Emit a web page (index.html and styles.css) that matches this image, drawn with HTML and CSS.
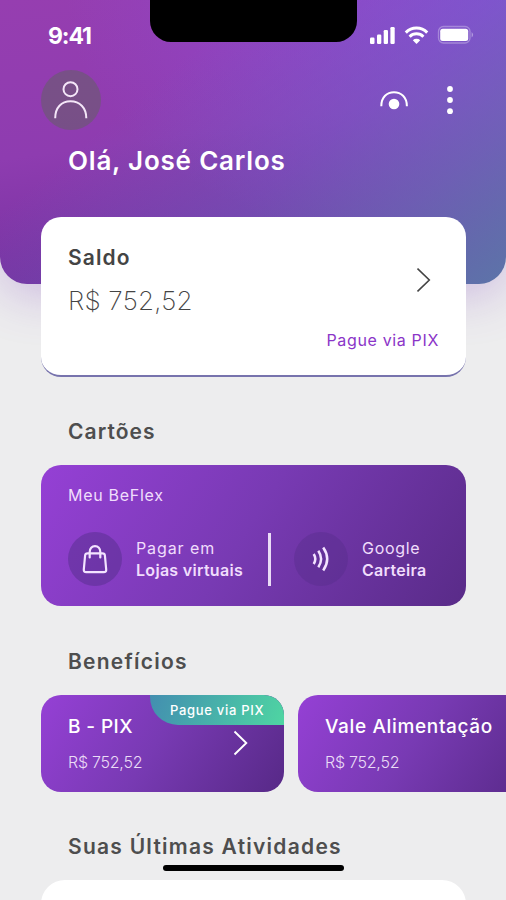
FILE: index.html
```html
<!DOCTYPE html>
<html lang="pt-BR">
<head>
<meta charset="utf-8">
<meta name="viewport" content="width=device-width">
<title>BeFlex</title>
<link rel="stylesheet" href="styles.css">
</head>
<body>
<div class="phone">
  <header class="hero">
    <div class="notch"></div>
    <div class="status">
      <span class="clock">9:41</span>
      <svg class="status-icons" width="106" height="22" viewBox="0 0 106 22" fill="#fff">
        <rect x="1" y="13.500" width="4.500" height="6.500" rx="1.200"/><rect x="8" y="10.500" width="4.300" height="9.500" rx="1.200"/><rect x="14.700" y="6" width="4.300" height="14" rx="1.200"/><rect x="21.400" y="3" width="4.300" height="17" rx="1.200"/>
        <g fill="none" stroke="#fff" stroke-width="3"><path d="M36.800 8.600a15 15 0 0 1 21.400 0"/><path d="M40.600 12.700a9.800 9.800 0 0 1 13.800 0"/></g>
        <path d="M43.800 16.200a5.400 5.400 0 0 1 7.400 0L47.500 19.900z"/>
        <rect x="69.500" y="2.500" width="31.500" height="16.500" rx="5" fill="none" stroke="#fff" stroke-opacity=".3" stroke-width="1.300"/>
        <rect x="71.200" y="4.700" width="28" height="12.300" rx="2.500"/>
        <path d="M102.600 8q3 2.800 0 5.600z" opacity=".4"/>
      </svg>
    </div>
    <div class="toolbar">
      <div class="avatar">
        <svg width="60" height="60" viewBox="0 0 60 60" fill="none" stroke="#f4e6f8" stroke-width="2"><circle cx="29.500" cy="19.200" r="7"/><path d="M14.200 48.300C14.200 37.500 20.500 31.300 29.500 31.300s15.800 6.200 15.800 17"/></svg>
      </div>
      <div class="actions">
        <svg width="30" height="22" viewBox="0 0 30 22"><path d="M2.300 17.200C2.300 8 8 3.200 15 3.200s12.900 4.800 12.900 14" fill="none" stroke="#fff" stroke-width="2"/><circle cx="15" cy="15" r="5.300" fill="#fff"/></svg>
        <svg width="8" height="32" viewBox="0 0 8 32" fill="#fff"><circle cx="4" cy="5" r="2.900"/><circle cx="4" cy="16" r="2.900"/><circle cx="4" cy="27.200" r="2.900"/></svg>
      </div>
    </div>
    <h1 class="greeting">Olá, José Carlos</h1>
  </header>

  <main class="content">
    <section class="balance">
      <h2 class="balance-title">Saldo</h2>
      <div class="balance-row">
        <span class="balance-value">R$ 752,52</span>
        <svg class="chev" width="14" height="26" viewBox="0 0 14 26" fill="none" stroke="#444" stroke-width="1.600"><path d="M.5 1.500 12.300 13 .5 24.500"/></svg>
      </div>
      <a class="balance-link">Pague via PIX</a>
    </section>

    <h2 class="heading cards-heading">Cartões</h2>
    <section class="wallet">
      <p class="wallet-name">Meu BeFlex</p>
      <div class="wallet-row">
        <div class="disc">
          <svg width="54" height="54" viewBox="0 0 54 54" fill="none" stroke="#f3e3ff" stroke-width="2.200" stroke-linecap="round" stroke-linejoin="round"><path d="M19.500 21.300h15q2.200 0 2.400 2.200l1.300 14q.2 2.700-2.400 2.700H18.200q-2.600 0-2.400-2.700l1.300-14q.2-2.200 2.400-2.200z"/><path d="M21.700 25.500V20c0-3.500 2.200-5.800 5.300-5.800s5.300 2.300 5.300 5.800v5.500"/></svg>
        </div>
        <p class="pay"><span class="pay-top pagar">Pagar em</span><strong class="pay-name">Lojas virtuais</strong></p>
        <div class="divider"></div>
        <div class="disc disc-dim">
          <svg width="54" height="54" viewBox="0 0 54 54" fill="none" stroke="#f3e3ff" stroke-width="2.500"><path d="M19.700 22q3.200 5 0 10"/><path d="M24.300 18.800q5.600 8.200 0 16.400"/><path d="M29.200 15.500q8 11.500 0 23"/></svg>
        </div>
        <p class="pay"><span class="pay-top google">Google</span><strong class="pay-name">Carteira</strong></p>
      </div>
    </section>

    <h2 class="heading benefits-heading">Benefícios</h2>
    <div class="benefits">
      <article class="benefit">
        <span class="tag">Pague via PIX</span>
        <h3 class="benefit-name bpix">B - PIX</h3>
        <p class="benefit-value">R$ 752,52</p>
        <svg class="benefit-chev" width="15" height="26" viewBox="0 0 15 26" fill="none" stroke="#fff" stroke-width="1.900"><path d="M1.500 1.500 13.300 13 1.500 24.500"/></svg>
      </article>
      <article class="benefit">
        <h3 class="benefit-name">Vale Alimentação</h3>
        <p class="benefit-value">R$ 752,52</p>
      </article>
    </div>

    <h2 class="heading activity-heading">Suas Últimas Atividades</h2>
    <section class="activity"></section>
  </main>
  <div class="home-bar"></div>
</div>
</body>
</html>
```

FILE: styles.css
```css
* { box-sizing: border-box; margin: 0; padding: 0; }
body { background: #ededee; font-family: Inter, "Open Sans", sans-serif; font-kerning: normal; }
.phone { position: relative; width: 506px; height: 900px; overflow: hidden; background: #ededee; }
span, strong, h1, h2, h3, a, p { white-space: nowrap; }

.hero {
  height: 284px;
  border-radius: 0 0 27px 27px;
  background:
    linear-gradient(140deg, rgba(105, 95, 190, 0) 30%, rgba(108, 95, 190, .45) 58%, rgba(103, 106, 180, .75) 78%, rgba(93, 118, 170, .95) 98%),
    radial-gradient(ellipse 440px 260px at 100% 0, rgba(142, 78, 222, .9), rgba(142, 78, 222, .45) 50%, rgba(142, 78, 222, 0)),
    linear-gradient(172deg, #963eb0 0%, #8e3cb0 45%, #6a2c98 100%);
  box-shadow: 0 10px 50px rgba(126, 62, 190, .3);
}
.notch { position: absolute; top: 0; left: 150px; width: 207px; height: 42px; background: #000; border-radius: 0 0 21px 21px; }
.status { display: flex; justify-content: space-between; height: 70px; padding: 24px 31px 0 48px; }
.clock { color: #fff; font-size: 23px; line-height: 24px; font-weight: 700; letter-spacing: -1.1px; }
.toolbar { display: flex; justify-content: space-between; height: 60px; padding: 0 52px 0 41px; }
.avatar { width: 60px; height: 60px; border-radius: 50%; background: rgba(105, 92, 110, .62); }
.actions { display: flex; align-items: center; gap: 37px; }
.greeting { margin: 14px 0 0 68px; color: #fff; font-size: 26px; line-height: 34px; font-weight: 600; letter-spacing: .8px; }

.content { position: relative; margin-top: -67px; }
.balance { width: 425px; height: 160px; margin-left: 41px; padding: 27px 27px 0; border-radius: 20px; background: #fff; border-bottom: 2px solid #7773ad; }
.balance-title { font-size: 21px; line-height: 27px; font-weight: 600; color: #444; letter-spacing: 1.100px; }
.balance-row { display: flex; justify-content: space-between; height: 51px; padding-right: 8px; }
.balance-value { margin-top: 13px; font-size: 26px; line-height: 34px; font-weight: 200; color: #444; letter-spacing: .2px; }
.chev { margin-top: -4px; }
.balance-link { display: block; margin-top: 7px; text-align: right; color: #8b35c8; font-size: 16px; line-height: 22px; letter-spacing: .65px; }

.heading { margin-left: 68px; color: #4e4e4e; font-size: 21px; line-height: 28px; font-weight: 600; letter-spacing: 1.250px; }
.cards-heading { margin-top: 41px; letter-spacing: 1.050px; }
.wallet { width: 425px; height: 141px; margin: 19px 0 0 41px; padding: 19px 27px 0; border-radius: 20px; color: #f0ddfc; background: linear-gradient(123deg, #9540d5 0%, #783ab3 48%, #592b88 100%); }
.wallet-name { font-size: 16px; line-height: 22px; letter-spacing: .7px; }
.wallet-row { display: flex; align-items: center; margin-top: 26px; }
.disc { flex: none; width: 54px; height: 54px; border-radius: 50%; background: rgba(83, 45, 137, .48); }
.disc-dim { background: rgba(83, 45, 137, .38); }
.pay { flex: none; width: 132px; margin-left: 14px; font-size: 16px; line-height: 22.500px; }
.pay-top, .pay-name { display: block; }
.pagar { letter-spacing: .9px; }
.google { letter-spacing: .7px; }
.pay-name { font-weight: 600; letter-spacing: .3px; }
.divider { flex: none; width: 3px; height: 53px; margin-right: 23px; background: #eadcf6; }

.benefits-heading { margin-top: 42px; }
.benefits { display: flex; gap: 14px; width: 560px; margin: 19px 0 0 41px; }
.benefit { position: relative; flex: 0 0 243px; height: 97px; padding: 19px 26px 0 27px; overflow: hidden; border-radius: 20px; color: #fff; background: linear-gradient(123deg, #9540d5 0%, #783ab3 48%, #572987 100%); }
.tag { position: absolute; top: 0; right: 0; width: 134px; height: 30px; padding-left: 20px; border-bottom-left-radius: 28px; font-size: 13px; line-height: 30px; font-weight: 500; letter-spacing: .7px; background: linear-gradient(110deg, #438eb0, #48b5a9 55%, #4fd5a2); }
.benefit-name { font-size: 19px; line-height: 26px; font-weight: 500; letter-spacing: .65px; }
.bpix { letter-spacing: .4px; }
.benefit-value { margin-top: 11px; font-size: 16px; line-height: 22px; font-weight: 300; color: #eadcf6; letter-spacing: -.25px; }
.benefit-chev { position: absolute; top: 35px; left: 192px; }

.activity-heading { margin-top: 41px; }
.activity { width: 425px; height: 60px; margin: 19px 0 0 41px; background: #fff; border-radius: 24px 24px 0 0; }
.home-bar { position: absolute; left: 163px; top: 865px; width: 181px; height: 6px; border-radius: 3px; background: #000; }
```
